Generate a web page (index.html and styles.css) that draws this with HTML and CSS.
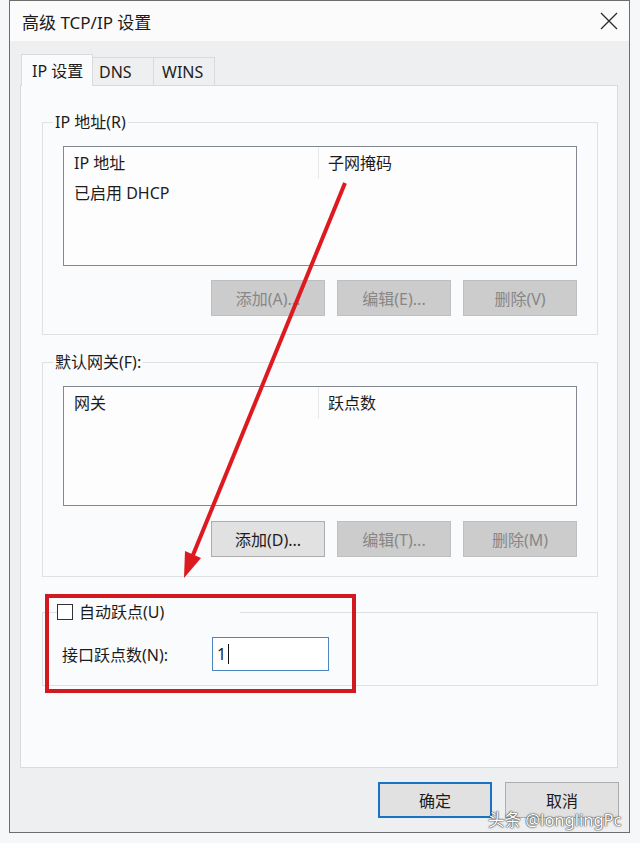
FILE: index.html
```html
<!DOCTYPE html>
<html lang="zh-CN">
<head>
    <meta charset="UTF-8">
    <meta name="viewport" content="width=device-width, initial-scale=1.0">
    <title>高级 TCP/IP 设置</title>
    <link rel="stylesheet" href="styles.css">
</head>
<body>
    <div class="window">
        <div class="titlebar">
            <span class="title">高级 TCP/IP 设置</span>
            <svg class="close" width="18" height="18" viewBox="0 0 18 18">
                <path d="M1 1 L17 17 M17 1 L1 17" stroke="#2b2b2b" stroke-width="1.3" fill="none"/>
            </svg>
        </div>

        <div class="dialog-body">
            <div class="tabs">
                <div class="tab active">IP 设置</div>
                <div class="tab">DNS</div>
                <div class="tab tab-wins">WINS</div>
            </div>

            <div class="panel">
                <fieldset class="group">
                    <legend>IP 地址(R)</legend>
                    <div class="list">
                        <div class="list-head">
                            <span class="col1">IP 地址</span>
                            <span class="col2">子网掩码</span>
                        </div>
                        <div class="list-row">
                            <span class="col1">已启用 DHCP</span>
                        </div>
                    </div>
                    <div class="btn-row">
                        <button class="btn" disabled>添加(A)...</button>
                        <button class="btn" disabled>编辑(E)...</button>
                        <button class="btn" disabled>删除(V)</button>
                    </div>
                </fieldset>

                <fieldset class="group group-gateway">
                    <legend>默认网关(F):</legend>
                    <div class="list">
                        <div class="list-head">
                            <span class="col1">网关</span>
                            <span class="col2">跃点数</span>
                        </div>
                    </div>
                    <div class="btn-row">
                        <button class="btn">添加(D)...</button>
                        <button class="btn" disabled>编辑(T)...</button>
                        <button class="btn" disabled>删除(M)</button>
                    </div>
                </fieldset>

                <fieldset class="group group-metric">
                    <legend><span class="checkbox"></span>自动跃点(U)</legend>
                    <div class="metric-row">
                        <span class="metric-label">接口跃点数(N):</span>
                        <div class="textbox">1<span class="caret"></span></div>
                    </div>
                </fieldset>
            </div>

            <div class="footer">
                <button class="btn btn-default">确定</button>
                <button class="btn">取消</button>
            </div>
        </div>
    </div>

    <!-- annotations drawn over the screenshot -->
    <div class="highlight"></div>
    <svg class="arrow" width="640" height="843" viewBox="0 0 640 843">
        <line x1="345" y1="183" x2="193" y2="555" stroke="#dc1a1f" stroke-width="4"/>
        <polygon points="184,578 201,558 185,551" fill="#dc1a1f"/>
    </svg>
    <div class="watermark">头条 @longlingPc</div>
</body>
</html>
```

FILE: styles.css
```css
body {
    margin: 0;
    background-color: #f6f7f8;
    font-family: "Noto Sans", "Noto Sans CJK SC", sans-serif;
    font-size: 16px;
    color: #1c1c1c;
}
.window {
    width: 621px;
    margin-left: 9px;
    box-sizing: border-box;
    border: 1px solid #6d6d6d;
    background-color: #eeeff1;
}
.titlebar {
    height: 40px;
    display: flex;
    align-items: center;
    justify-content: space-between;
    padding: 0 12px;
    background-color: #fbfbfc;
}
.title {
    font-size: 17px;
}
.close {
    margin-right: -1px;
}
.dialog-body {
    padding-top: 13px;
}
.tabs {
    display: flex;
    align-items: flex-end;
    padding-left: 11px;
}
.tab {
    width: 61px;
    height: 28px;
    line-height: 28px;
    padding-left: 6px;
    box-sizing: border-box;
    border: 1px solid #d9dadc;
    border-bottom: none;
    border-left: none;
    background-color: #eeeff1;
}
.tab.active {
    width: 72px;
    height: 32px;
    line-height: 32px;
    padding-left: 10px;
    border-left: 1px solid #d9dadc;
    background-color: #fafbfd;
    position: relative;
    z-index: 1;
    margin-bottom: -1px;
}
.tab-wins {
    padding-left: 8px;
}
.panel {
    width: 598px;
    height: 683px;
    box-sizing: border-box;
    margin-left: 10px;
    border: 1px solid #d9dadc;
    background-color: #fafbfd;
    padding-top: 26px;
}
.group {
    width: 556px;
    box-sizing: border-box;
    margin: 0 0 0 21px;
    padding: 14px 20px 18px 20px;
    border: 1px solid #dfe0e2;
}
.group legend {
    line-height: 20px;
    padding: 0 2px;
    margin-left: -10px;
}
.group-gateway {
    margin-top: 17px;
    padding-bottom: 19px;
}
.group-gateway .btn-row {
    margin-top: 15px;
}
.list {
    height: 120px;
    box-sizing: border-box;
    border: 1px solid #828790;
    background-color: #fdfdfe;
}
.list-head, .list-row {
    display: grid;
    grid-template-columns: 255px 1fr;
}
.list-head {
    height: 32px;
    line-height: 32px;
}
.list-row {
    height: 28px;
    line-height: 28px;
}
.col1 {
    padding-left: 10px;
}
.list-head .col1 {
    border-right: 1px solid #e8e9eb;
}
.col2 {
    padding-left: 9px;
}
.btn-row {
    display: flex;
    justify-content: flex-end;
    gap: 12px;
    margin-top: 14px;
}
.btn {
    width: 114px;
    height: 36px;
    box-sizing: border-box;
    border: 1px solid #adadad;
    background-color: #e1e1e1;
    font-family: inherit;
    font-size: 16px;
    color: #1c1c1c;
    padding: 0;
}
.btn:disabled {
    background-color: #cccccc;
    border-color: #bfbfbf;
    color: #878787;
}
.group-metric {
    margin-top: 25px;
    padding: 15px 20px 14px 20px;
}
.group-metric legend {
    display: flex;
    align-items: center;
    gap: 6px;
    padding: 0 76px 0 0;
    margin-left: -6px;
}
.checkbox {
    width: 14px;
    height: 14px;
    border: 1px solid #333333;
    background-color: #ffffff;
}
.metric-row {
    display: flex;
    align-items: center;
}
.metric-label {
    width: 150px;
    margin-left: -1px;
}
.textbox {
    width: 117px;
    height: 34px;
    box-sizing: border-box;
    border: 1px solid #4a86c0;
    background-color: #ffffff;
    padding-left: 4px;
    line-height: 32px;
    display: flex;
    align-items: center;
}
.caret {
    width: 1px;
    height: 20px;
    background-color: #111111;
    margin-left: 2px;
}
.footer {
    display: flex;
    justify-content: flex-end;
    gap: 13px;
    padding: 14px 10px 14px 0;
}
.btn-default {
    border: 2px solid #1a72c4;
}
.highlight {
    position: absolute;
    left: 45px;
    top: 594px;
    width: 311px;
    height: 99px;
    box-sizing: border-box;
    border: 4px solid #d31920;
}
.arrow {
    position: absolute;
    left: 0;
    top: 0;
    pointer-events: none;
}
.watermark {
    position: absolute;
    left: 488px;
    top: 809px;
    font-size: 16.5px;
    line-height: 22px;
    white-space: nowrap;
    color: #ffffff;
    text-shadow: 0 0 2px #333333, 0 0 1px #000000;
}
```
